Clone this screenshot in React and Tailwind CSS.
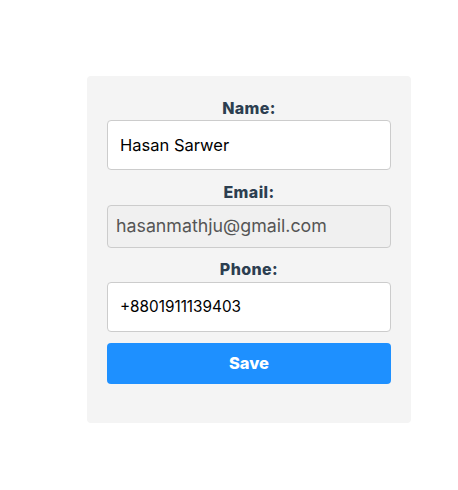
export default function App() {
  const font = { fontFamily: "Inter, 'Noto Sans', sans-serif" };
  return (
    <div className="w-[458px] h-[490px] bg-white" style={font}>
      <div className="relative left-[87px] top-[76px] w-[324px] h-[347px] rounded-[4px] bg-[#f4f4f4] px-[20px] pt-[20px] box-border">
        <div className="h-[24px] leading-[24px] text-center text-[16px] font-extrabold tracking-[0.4px] text-[#2c3e50]">Name:</div>
        <div className="h-[50px] border border-[#cccccc] rounded-[4px] bg-white flex items-center pl-[12px] text-[16.5px] text-black">Hasan Sarwer</div>
        <div className="mt-[10px] h-[24px] leading-[24px] text-center text-[16px] font-extrabold tracking-[0.4px] text-[#2c3e50]">Email:</div>
        <div className="mt-[1px] h-[43px] border border-[#cccccc] rounded-[4px] bg-[#f0f0f0] flex items-center pl-[8px] text-[17.8px] text-[#555555]">hasanmathju@gmail.com</div>
        <div className="mt-[9px] h-[24px] leading-[24px] text-center text-[16px] font-extrabold tracking-[0.4px] text-[#2c3e50]">Phone:</div>
        <div className="mt-[1px] h-[50px] border border-[#cccccc] rounded-[4px] bg-white flex items-center pl-[12px] text-[15.3px] text-black">+8801911139403</div>
        <div className="mt-[11px] h-[41px] rounded-[4px] bg-[#1e90ff] flex items-center justify-center text-[16.5px] font-extrabold text-white">Save</div>
      </div>
    </div>
  );
}
